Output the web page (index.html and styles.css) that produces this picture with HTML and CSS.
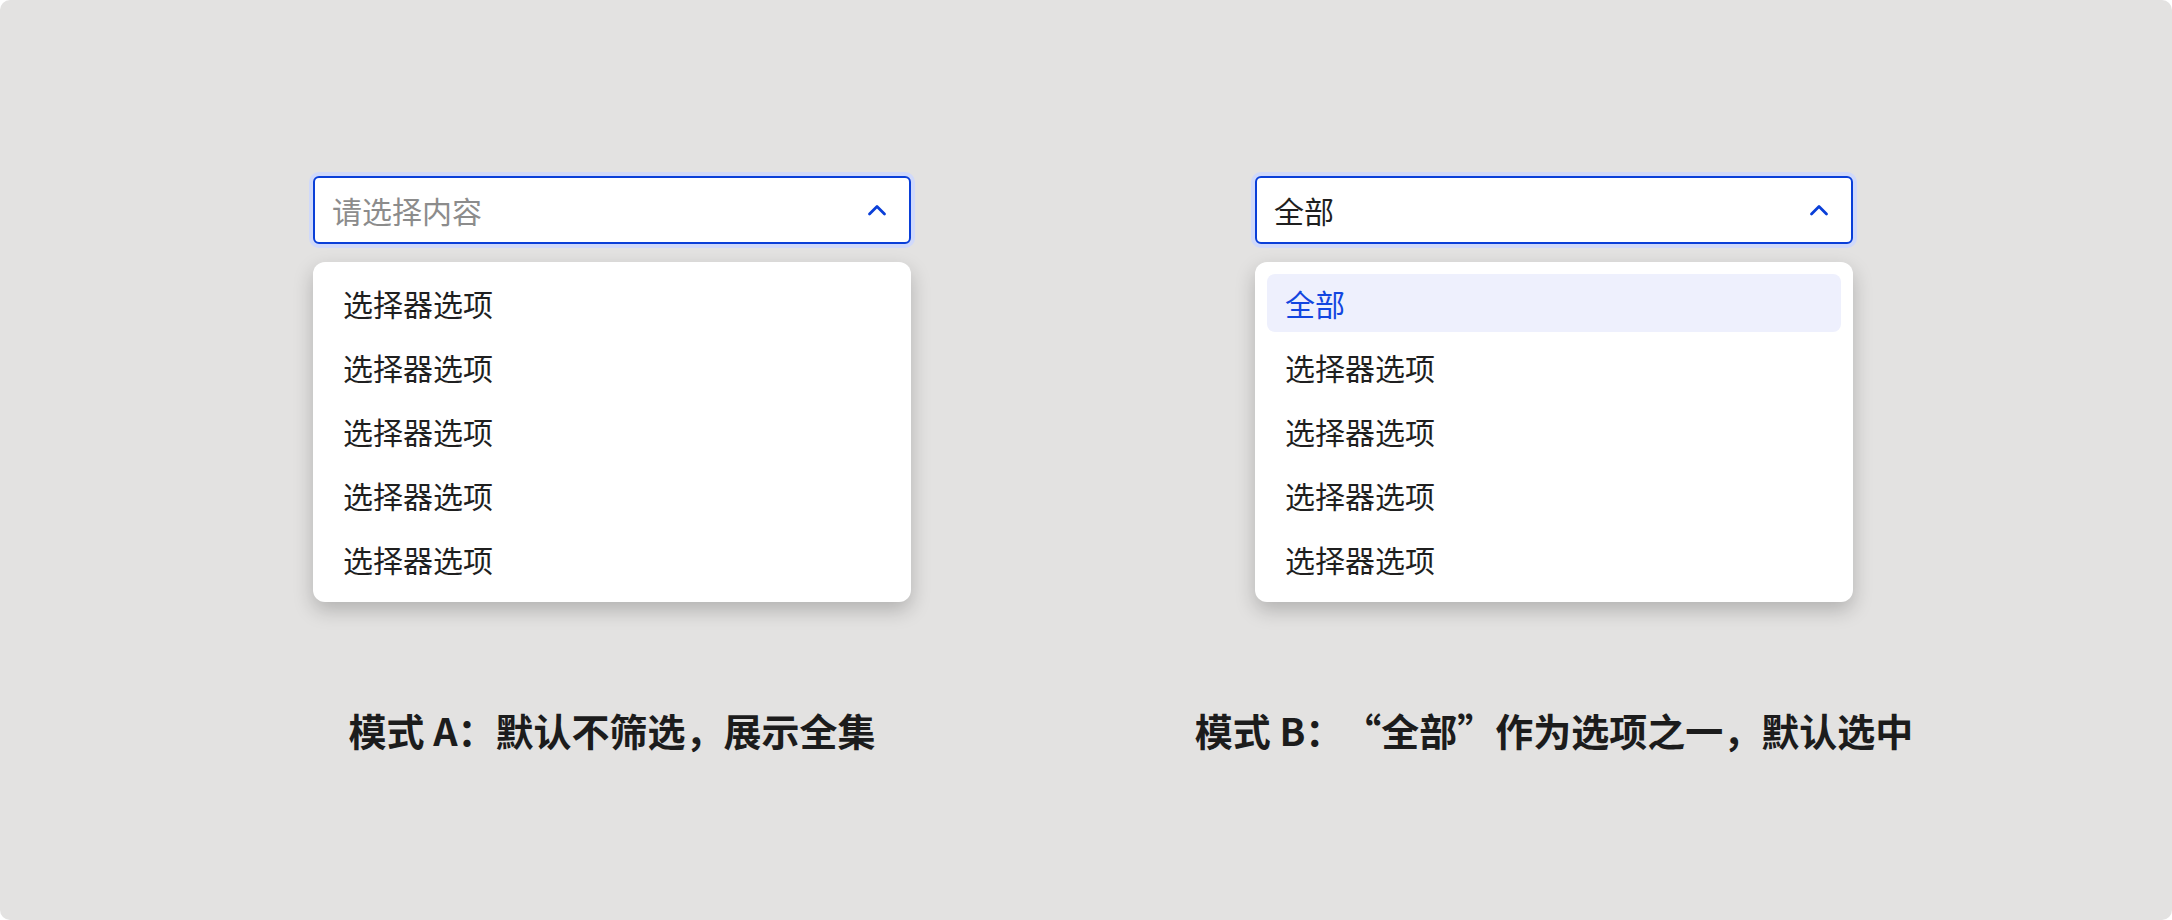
FILE: index.html
```html
<!DOCTYPE html>
<html lang="zh-CN">
<head>
    <meta charset="UTF-8">
    <meta name="viewport" content="width=device-width, initial-scale=1.0">
    <title>选择器模式</title>
    <link rel="stylesheet" href="styles.css">
</head>
<body>
    <div class="page">
        <div class="demos">
            <div class="demo">
                <div class="select">
                    <span class="placeholder">请选择内容</span>
                    <svg class="arrow" width="20" height="12" viewBox="0 0 20 12">
                        <path d="M2.5 10 L10 2.5 L17.5 10" fill="none" stroke="#0a3fd8" stroke-width="2.8" stroke-linecap="round" stroke-linejoin="round"/>
                    </svg>
                </div>
                <div class="menu">
                    <div class="option">选择器选项</div>
                    <div class="option">选择器选项</div>
                    <div class="option">选择器选项</div>
                    <div class="option">选择器选项</div>
                    <div class="option">选择器选项</div>
                </div>
                <div class="caption">模式 A：默认不筛选，展示全集</div>
            </div>

            <div class="demo">
                <div class="select">
                    <span class="value">全部</span>
                    <svg class="arrow" width="20" height="12" viewBox="0 0 20 12">
                        <path d="M2.5 10 L10 2.5 L17.5 10" fill="none" stroke="#0a3fd8" stroke-width="2.8" stroke-linecap="round" stroke-linejoin="round"/>
                    </svg>
                </div>
                <div class="menu">
                    <div class="option active">全部</div>
                    <div class="option">选择器选项</div>
                    <div class="option">选择器选项</div>
                    <div class="option">选择器选项</div>
                    <div class="option">选择器选项</div>
                </div>
                <div class="caption">模式 B：“全部”作为选项之一，默认选中</div>
            </div>
        </div>
    </div>
</body>
</html>
```

FILE: styles.css
```css
body {
    margin: 0;
    background: #ffffff;
    font-family: "Noto Sans CJK SC", "Noto Sans", sans-serif;
    color: #1f1f1f;
    text-spacing-trim: space-all;
}

.page {
    height: 920px;
    box-sizing: border-box;
    padding: 176px 0 0 313px;
    background: #e3e2e1;
    border-radius: 10px;
}

.demos {
    display: grid;
    grid-template-columns: 598px 598px;
    column-gap: 344px;
}

.demo {
    display: flex;
    flex-direction: column;
}

.select {
    height: 68px;
    box-sizing: border-box;
    display: flex;
    align-items: center;
    justify-content: space-between;
    padding: 0 22px 0 17px;
    background: #fff;
    border: 2px solid #0a3fd8;
    border-radius: 6px;
    box-shadow: 0 0 0 4px #d0d9fa;
    font-size: 30px;
}

.placeholder {
    color: #8c8c8c;
}

.value {
    color: #1f1f1f;
}

.arrow {
    display: block;
}

.menu {
    margin-top: 18px;
    display: flex;
    flex-direction: column;
    gap: 6px;
    padding: 12px 12px 14px;
    background: #fff;
    border-radius: 12px;
    box-shadow: 0 8px 20px rgba(0, 0, 0, 0.22);
}

.option {
    height: 58px;
    display: flex;
    align-items: center;
    padding: 0 18px;
    border-radius: 8px;
    font-size: 30px;
    color: #1f1f1f;
}

.option.active {
    background: #eef0fd;
    color: #1346e0;
}

.caption {
    margin-top: 102px;
    display: flex;
    justify-content: center;
    white-space: nowrap;
    line-height: 52px;
    font-size: 38px;
    font-weight: bold;
    color: #1c1c1c;
}
```
